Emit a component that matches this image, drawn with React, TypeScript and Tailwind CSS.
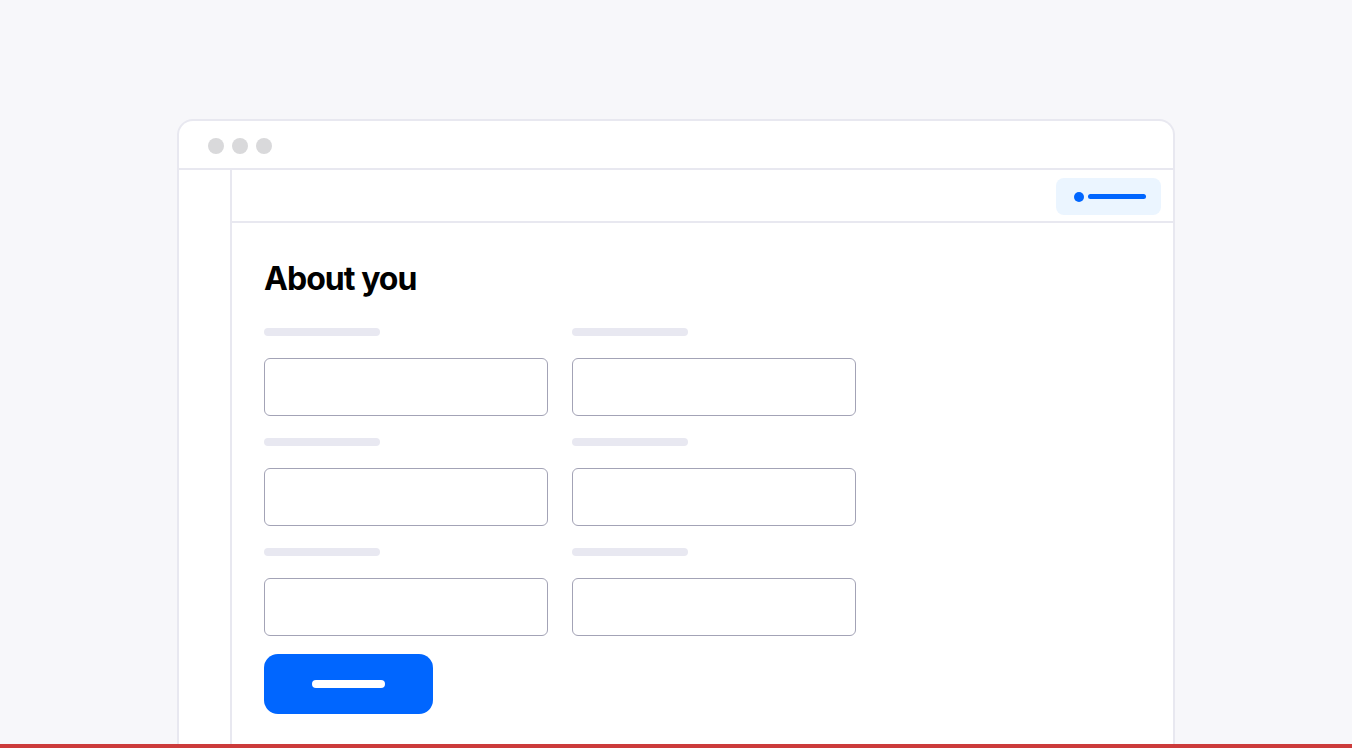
const rows = [0, 1, 2];

function Field() {
  return (
    <div>
      <div className="h-2 w-[116px] rounded-full bg-[#e8e8f1]" />
      <div className="mt-[22px] h-[58px] w-[284px] rounded-[6px] border border-[#a3a3b6] bg-white" />
    </div>
  );
}

export default function App() {
  return (
    <div className="flex h-[748px] flex-col overflow-hidden bg-[#f7f7fa] font-['Inter',sans-serif]">
      <div className="min-h-0 flex-1 overflow-hidden pt-[119px]">
        <div className="mx-auto flex h-[700px] w-[998px] flex-col rounded-t-[16px] border-2 border-b-0 border-[#e8e8f0] bg-white">
          {/* window chrome */}
          <div className="flex h-[49px] shrink-0 items-center gap-2 border-b-2 border-[#e8e8f0] pl-[29px] pt-[2px]">
            <span className="h-4 w-4 rounded-full bg-[#d9d9db]" />
            <span className="h-4 w-4 rounded-full bg-[#d9d9db]" />
            <span className="h-4 w-4 rounded-full bg-[#d9d9db]" />
          </div>

          <div className="flex min-h-0 flex-1">
            <aside className="w-[53px] shrink-0 border-r-2 border-[#e8e8f0]" />

            <div className="flex min-w-0 flex-1 flex-col">
              <header className="flex h-[53px] shrink-0 items-start justify-end border-b-2 border-[#e8e8f0] pr-[12px] pt-2">
                <div className="flex h-[37px] items-center gap-1 rounded-[8px] bg-[#ebf5ff] pl-[18px] pr-[15px]">
                  <span className="h-[10px] w-[10px] rounded-full bg-[#0066ff]" />
                  <span className="h-[5px] w-[58px] rounded-full bg-[#0066ff]" />
                </div>
              </header>

              <main className="px-[32px] pt-9">
                <h1 className="text-[32px] font-bold leading-[40px] tracking-[-0.03em] text-black">
                  About you
                </h1>

                <div className="mt-[29px] grid grid-cols-[284px_284px] gap-x-6 gap-y-[22px]">
                  {rows.map((r) => (
                    <div key={r} className="contents">
                      <Field />
                      <Field />
                    </div>
                  ))}
                </div>

                <button className="mt-[18px] flex h-[60px] w-[169px] items-center justify-center rounded-[14px] bg-[#0066ff]">
                  <span className="h-2 w-[73px] rounded-full bg-white" />
                </button>
              </main>
            </div>
          </div>
        </div>
      </div>
      <div className="h-1 shrink-0 bg-[#cc3b3b]" />
    </div>
  );
}
